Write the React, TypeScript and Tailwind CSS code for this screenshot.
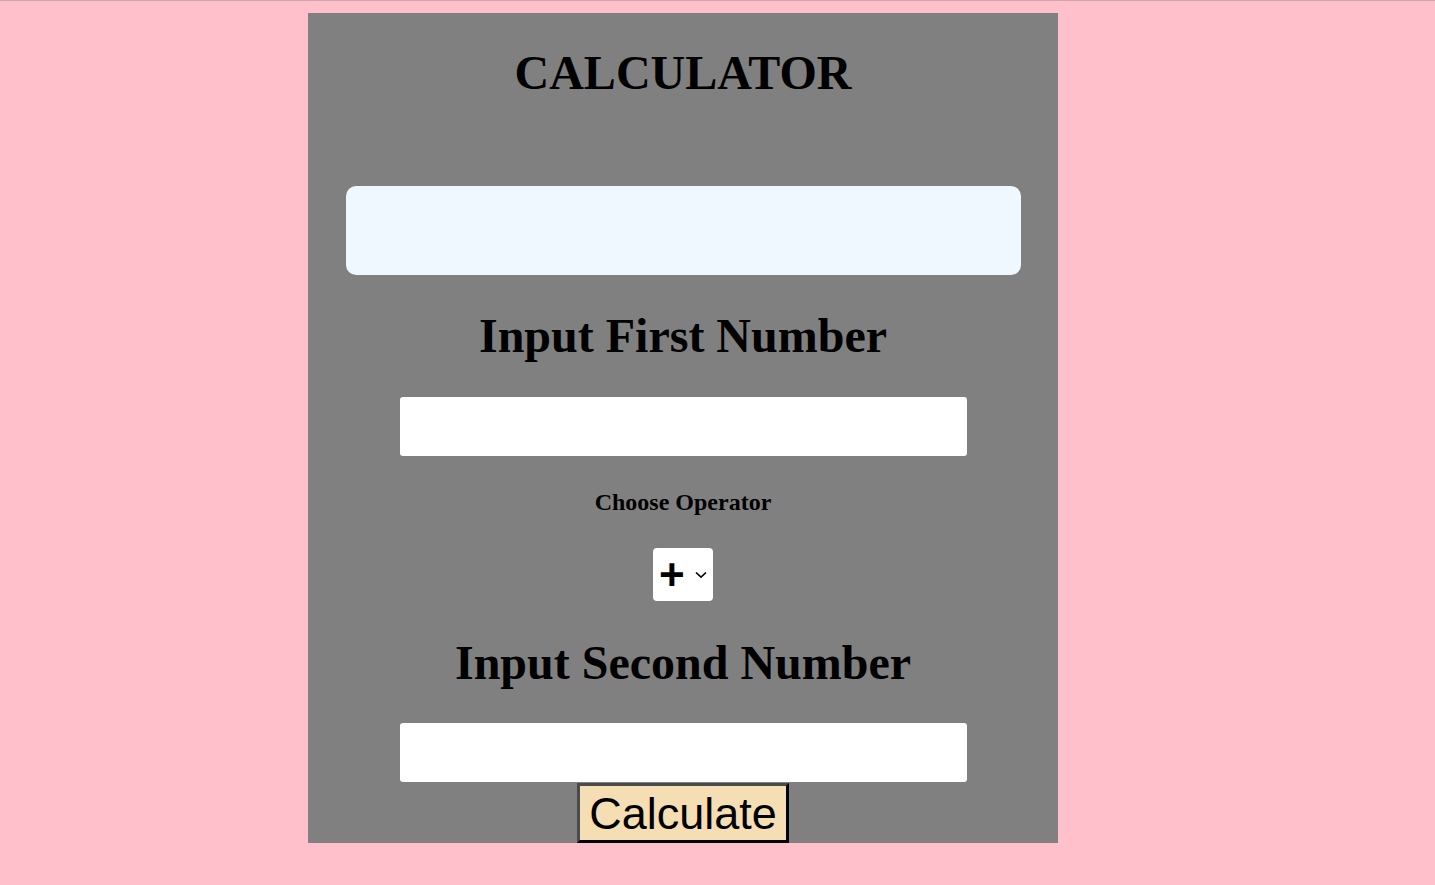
import React from "react";

export default function App() {
  const serif = { fontFamily: '"Liberation Serif", "Times New Roman", serif' };
  const sans = { fontFamily: '"Liberation Sans", Arial, sans-serif' };
  return (
    <div className="min-h-screen w-full bg-[#ffc0cb]">
      <div className="h-px w-full bg-[#c9a9b0]" />
      <div className="ml-[308px] mt-[12px] flex w-[750px] flex-col items-center bg-[#808080] pt-[33px]" style={serif}>
        <h1 className="m-0 h-[54px] text-[48px] font-bold leading-[54px] text-black">CALCULATOR</h1>
        <div className="mt-[86px] h-[89px] w-[675px] rounded-[10px] bg-[#eff7ff]" />
        <h2 className="mt-[34px] h-[54px] text-[48px] font-bold leading-[54px] text-black">Input First Number</h2>
        <input type="text" className="mt-[34px] h-[59px] w-[567px] rounded-[3px] border-0 bg-white outline-none" />
        <h3 className="mt-[32px] h-[28px] text-[24px] font-bold leading-[28px] text-black">Choose Operator</h3>
        <div className="mt-[32px] flex h-[53px] w-[60px] items-center rounded-[4px] bg-white pl-[6px]" style={sans}>
          <span className="text-[44px] font-bold leading-none text-black">+</span>
          <svg className="ml-[10px]" width="12" height="8" viewBox="0 0 12 8">
            <path d="M1 1.5 L6 6.2 L11 1.5" fill="none" stroke="#000" strokeWidth="1.6" />
          </svg>
        </div>
        <h2 className="mt-[35px] h-[54px] text-[48px] font-bold leading-[54px] text-black">Input Second Number</h2>
        <input type="text" className="mt-[33px] h-[59px] w-[567px] rounded-[3px] border-0 bg-white outline-none" />
        <button
          className="mt-[1px] h-[60px] w-[212px] border-[3px] border-t-[#4a4a4a] border-l-[#4a4a4a] border-r-black border-b-black bg-[#f5deb3] text-[45px] leading-none text-black"
          style={sans}
        >
          Calculate
        </button>
      </div>
    </div>
  );
}
